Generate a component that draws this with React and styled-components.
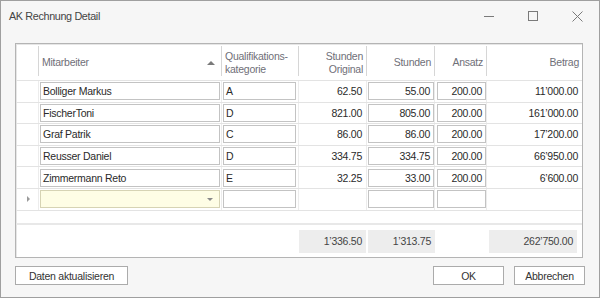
import React from 'react';
import styled, { createGlobalStyle } from 'styled-components';

const GlobalStyle = createGlobalStyle`
  html, body {
    margin: 0;
    padding: 0;
    background: #f6f6f6;
  }
  * {
    box-sizing: border-box;
  }
`;

const FONT = `"Liberation Sans", Arial, sans-serif`;

const COLS = '23px 183px 77px 68px 68px 52px 95px';

const Window = styled.div`
  width: 600px;
  height: 298px;
  border: 1px solid #9f9f9f;
  background: #f6f6f6;
  display: flex;
  flex-direction: column;
  font-family: ${FONT};
  font-size: 10.5px;
  letter-spacing: -0.25px;
  color: #2a2a2a;
`;

const TitleBar = styled.div`
  height: 30px;
  display: flex;
  align-items: center;
  padding-left: 8px;
`;

const Title = styled.div`
  font-size: 10.8px;
  letter-spacing: -0.35px;
  color: #444;
`;

const Caption = styled.div`
  margin-left: auto;
  display: flex;
  height: 100%;
`;

const CaptionButton = styled.div`
  width: 44px;
  height: 100%;
  display: flex;
  align-items: center;
  justify-content: center;
`;

const Body = styled.div`
  flex: 1;
  padding: 12px 14px 0;
  display: flex;
  flex-direction: column;
`;

const Grid = styled.div`
  width: 568px;
  height: 215px;
  border: 1px solid #b4b4b4;
  background: #fff;
  display: flex;
  flex-direction: column;
  box-shadow: inset 1px 1px 0 #e6e6e6;
`;

const Row = styled.div`
  display: grid;
  grid-template-columns: ${COLS};
  height: ${(p) => p.$h};
  border-bottom: 1px solid #e3e3e3;
  flex-shrink: 0;
`;

const HeadCell = styled.div`
  display: flex;
  align-items: center;
  justify-content: ${(p) => (p.$right ? 'flex-end' : 'space-between')};
  text-align: ${(p) => (p.$right ? 'right' : 'left')};
  padding: 3px 3px 0;
  line-height: 13px;
  color: #6f6f78;
  border-right: ${(p) => (p.$last ? 'none' : '1px solid #d6d6d6')};
  margin: 2px 0 4px;
`;

const SortArrow = styled.span`
  width: 0;
  height: 0;
  border-left: 4px solid transparent;
  border-right: 4px solid transparent;
  border-bottom: 4px solid #7a7a7a;
  margin-right: 3px;
`;

const Cell = styled.div`
  display: flex;
  align-items: center;
  justify-content: ${(p) => (p.$right ? 'flex-end' : 'flex-start')};
  padding: ${(p) => p.$pad || '0 1px'};
  border-right: ${(p) => (p.$last ? 'none' : '1px solid #ececec')};
`;

const Editor = styled.div`
  flex: 1;
  height: 18px;
  display: flex;
  align-items: center;
  justify-content: ${(p) => (p.$right ? 'flex-end' : 'space-between')};
  padding: 0 3px 0 2px;
  border: 1px solid ${(p) => (p.$focus ? '#d6d3b4' : '#c3c3c3')};
  background: ${(p) => (p.$focus ? '#fefde5' : '#fff')};
`;

const DropArrow = styled.span`
  width: 0;
  height: 0;
  border-left: 3px solid transparent;
  border-right: 3px solid transparent;
  border-top: 3px solid #8a8a8a;
  margin-right: 3px;
`;

const Indicator = styled.span`
  width: 0;
  height: 0;
  border-top: 3px solid transparent;
  border-bottom: 3px solid transparent;
  border-left: 3px solid #9a9a9a;
  margin-left: 10px;
`;

const Filler = styled.div`
  flex: 1;
`;

const Footer = styled.div`
  display: grid;
  grid-template-columns: ${COLS};
  height: 34px;
  border-top: 2px solid #e8e8e8;
  align-items: center;
`;

const Summary = styled.div`
  grid-column: ${(p) => p.$col};
  height: 23px;
  margin: ${(p) => p.$margin};
  background: #ededed;
  display: flex;
  align-items: center;
  justify-content: flex-end;
  padding-right: 4px;
  color: #444;
`;

const ButtonRow = styled.div`
  display: flex;
  margin-top: 8px;
  gap: 10px;
`;

const Button = styled.div`
  width: ${(p) => p.$w}px;
  height: 19px;
  border: 1px solid #ababab;
  background: #fff;
  display: flex;
  align-items: center;
  justify-content: center;
  color: #333;
  margin-left: ${(p) => (p.$push ? 'auto' : '0')};
`;

const rows = [
  ['Bolliger Markus', 'A', '62.50', '55.00', '200.00', '11’000.00'],
  ['FischerToni', 'D', '821.00', '805.00', '200.00', '161’000.00'],
  ['Graf Patrik', 'C', '86.00', '86.00', '200.00', '17’200.00'],
  ['Reusser Daniel', 'D', '334.75', '334.75', '200.00', '66’950.00'],
  ['Zimmermann Reto', 'E', '32.25', '33.00', '200.00', '6’600.00'],
];

const Minimize = () => (
  <svg width="10" height="10" viewBox="0 0 10 10">
    <path d="M0 5.5h10" stroke="#7a7a7a" strokeWidth="1" />
  </svg>
);

const Maximize = () => (
  <svg width="10" height="10" viewBox="0 0 10 10">
    <rect x="0.5" y="0.5" width="9" height="9" fill="none" stroke="#7a7a7a" strokeWidth="1" />
  </svg>
);

const Close = () => (
  <svg width="11" height="11" viewBox="0 0 11 11">
    <path d="M0.5 0.5l10 10M10.5 0.5l-10 10" stroke="#7a7a7a" strokeWidth="1" />
  </svg>
);

export default function App() {
  return (
    <>
      <GlobalStyle />
      <Window>
        <TitleBar>
          <Title>AK Rechnung Detail</Title>
          <Caption>
            <CaptionButton><Minimize /></CaptionButton>
            <CaptionButton><Maximize /></CaptionButton>
            <CaptionButton><Close /></CaptionButton>
          </Caption>
        </TitleBar>
        <Body>
          <Grid>
            <Row $h="37px">
              <HeadCell />
              <HeadCell>
                <span>Mitarbeiter</span>
                <SortArrow />
              </HeadCell>
              <HeadCell>Qualifikations-<br />kategorie</HeadCell>
              <HeadCell $right>Stunden<br />Original</HeadCell>
              <HeadCell $right>Stunden</HeadCell>
              <HeadCell $right>Ansatz</HeadCell>
              <HeadCell $right $last>Betrag</HeadCell>
            </Row>
            {rows.map((r) => (
              <Row key={r[0]} $h="21.6px">
                <Cell />
                <Cell><Editor>{r[0]}</Editor></Cell>
                <Cell $pad="0 2px 0 1px"><Editor>{r[1]}</Editor></Cell>
                <Cell $right $pad="0 4px 0 0">{r[2]}</Cell>
                <Cell $pad="0 0 0 1px"><Editor $right>{r[3]}</Editor></Cell>
                <Cell $pad="0 0 0 2px"><Editor $right>{r[4]}</Editor></Cell>
                <Cell $right $last $pad="0 4px 0 0">{r[5]}</Cell>
              </Row>
            ))}
            <Row $h="21.6px">
              <Cell><Indicator /></Cell>
              <Cell><Editor $focus><span /><DropArrow /></Editor></Cell>
              <Cell $pad="0 2px 0 1px"><Editor /></Cell>
              <Cell />
              <Cell $pad="0 0 0 1px"><Editor /></Cell>
              <Cell $pad="0 0 0 2px"><Editor /></Cell>
              <Cell $last />
            </Row>
            <Filler />
            <Footer>
              <Summary $col="4" $margin="0 1px 0 0">1’336.50</Summary>
              <Summary $col="5" $margin="0 0 0 1px">1’313.75</Summary>
              <Summary $col="7" $margin="0 5px 0 2px">262’750.00</Summary>
            </Footer>
          </Grid>
          <ButtonRow>
            <Button $w={113}>Daten aktualisieren</Button>
            <Button $w={71} $push>OK</Button>
            <Button $w={71}>Abbrechen</Button>
          </ButtonRow>
        </Body>
      </Window>
    </>
  );
}
